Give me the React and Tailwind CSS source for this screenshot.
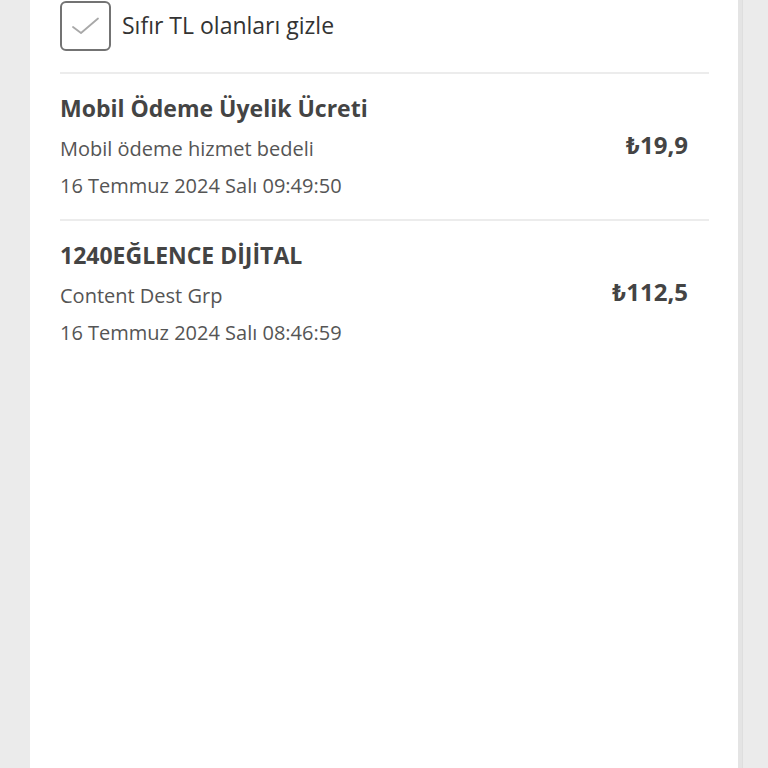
import { useState } from 'react';

const items = [
  {
    title: 'Mobil Ödeme Üyelik Ücreti',
    desc: 'Mobil ödeme hizmet bedeli',
    date: '16 Temmuz 2024 Salı 09:49:50',
    amount: '₺19,9',
  },
  {
    title: '1240EĞLENCE DİJİTAL',
    desc: 'Content Dest Grp',
    date: '16 Temmuz 2024 Salı 08:46:59',
    amount: '₺112,5',
  },
];

export default function App() {
  const [hideZero, setHideZero] = useState(true);

  return (
    <div className="min-h-screen flex bg-[#ebebeb]" style={{ fontFamily: '"Open Sans", Roboto, sans-serif' }}>
      <div className="ml-[30px] w-[708px] min-h-screen bg-white pl-[30px] pr-[29px]">
        <div className="flex items-center gap-[11px] h-[51px]">
          <button
            type="button"
            onClick={() => setHideZero(!hideZero)}
            className="w-[51px] h-[50px] flex items-center justify-center rounded-[6px] border-2 border-[#737373] bg-white"
          >
            {hideZero && (
              <svg width="30" height="18" viewBox="0 0 30 18" fill="none">
                <path d="M2 10 L10 16 L27 1.5" stroke="#a8a8a8" strokeWidth="1.8" strokeLinecap="round" strokeLinejoin="round" />
              </svg>
            )}
          </button>
          <span className="text-[23px] text-[#333]">Sıfır TL olanları gizle</span>
        </div>

        <div className="mt-[21px]">
          {items.map((it) => (
            <div key={it.title} className="flex items-center border-t-2 border-[#ececec] pt-[16px] pb-[15px] pr-[21px]">
              <div className="flex-1">
                <div className="text-[23px] leading-[36px] font-bold text-[#444]">{it.title}</div>
                <div className="mt-[4px] text-[20px] leading-[37px] text-[#555]">{it.desc}</div>
                <div className="text-[20px] leading-[37px] text-[#555]">{it.date}</div>
              </div>
              <div className="mb-[4px] text-[24px] font-bold text-[#444]">{it.amount}</div>
            </div>
          ))}
        </div>
      </div>
      <div className="w-[5px] min-h-screen bg-[#e4e4e4] border-r border-[#dedede]" />
    </div>
  );
}
